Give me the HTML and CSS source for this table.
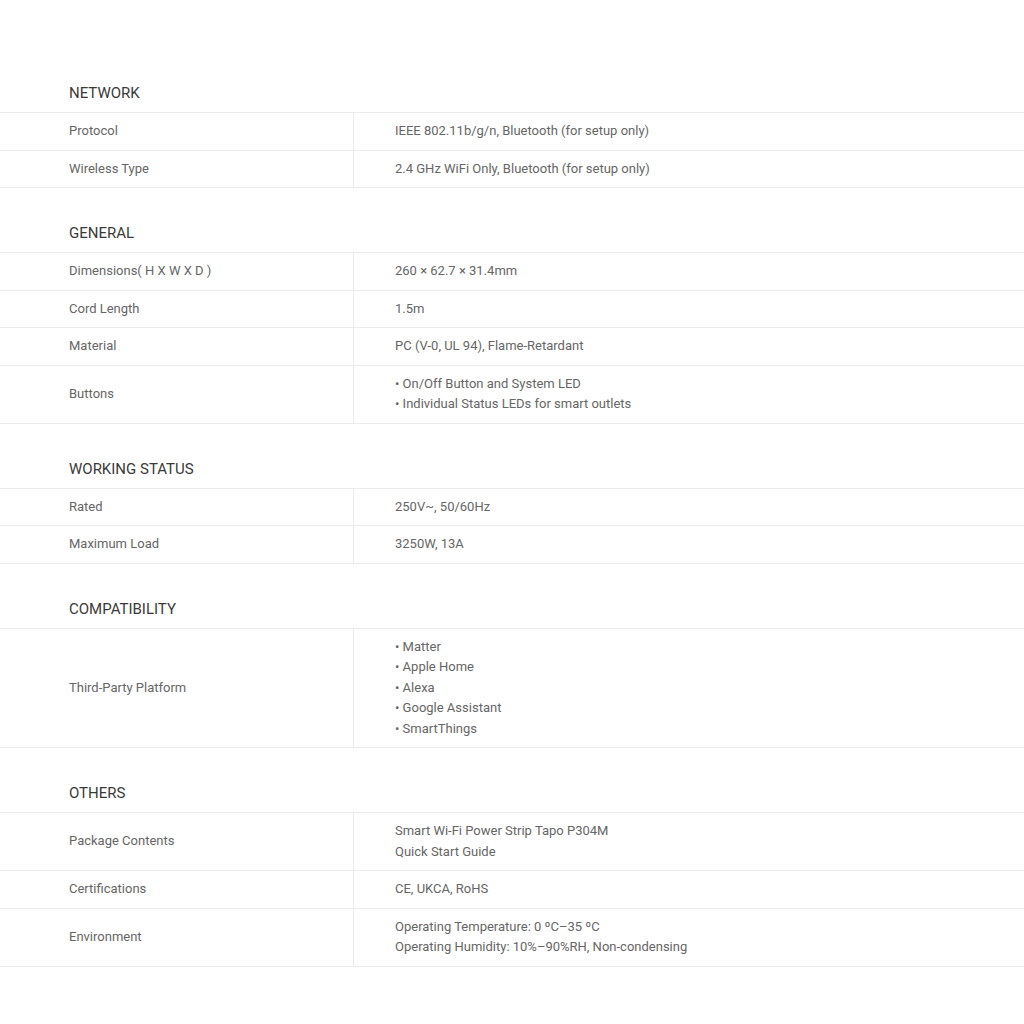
FILE: index.html
```html
<!DOCTYPE html>
<html lang="en">
<head>
  <meta charset="UTF-8" />
  <meta name="viewport" content="width=device-width, initial-scale=1.0"/>
  <title>Specifications | Tapo P304M</title>
  <link rel="stylesheet" href="styles.css">
</head>
<body>
  <div class="specs">

    <div class="spec-group">
      <h3>NETWORK</h3>
      <div class="spec-row">
        <div class="spec-name">Protocol</div>
        <div class="spec-value">IEEE 802.11b/g/n, Bluetooth (for setup only)</div>
      </div>
      <div class="spec-row">
        <div class="spec-name">Wireless Type</div>
        <div class="spec-value">2.4 GHz WiFi Only, Bluetooth (for setup only)</div>
      </div>
    </div>

    <div class="spec-group">
      <h3>GENERAL</h3>
      <div class="spec-row">
        <div class="spec-name">Dimensions( H X W X D )</div>
        <div class="spec-value">260 × 62.7 × 31.4mm</div>
      </div>
      <div class="spec-row">
        <div class="spec-name">Cord Length</div>
        <div class="spec-value">1.5m</div>
      </div>
      <div class="spec-row">
        <div class="spec-name">Material</div>
        <div class="spec-value">PC (V-0, UL 94), Flame-Retardant</div>
      </div>
      <div class="spec-row">
        <div class="spec-name">Buttons</div>
        <div class="spec-value">
          <p>• On/Off Button and System LED</p>
          <p>• Individual Status LEDs for smart outlets</p>
        </div>
      </div>
    </div>

    <div class="spec-group">
      <h3>WORKING STATUS</h3>
      <div class="spec-row">
        <div class="spec-name">Rated</div>
        <div class="spec-value">250V~, 50/60Hz</div>
      </div>
      <div class="spec-row">
        <div class="spec-name">Maximum Load</div>
        <div class="spec-value">3250W, 13A</div>
      </div>
    </div>

    <div class="spec-group">
      <h3>COMPATIBILITY</h3>
      <div class="spec-row">
        <div class="spec-name">Third-Party Platform</div>
        <div class="spec-value">
          <p>• Matter</p>
          <p>• Apple Home</p>
          <p>• Alexa</p>
          <p>• Google Assistant</p>
          <p>• SmartThings</p>
        </div>
      </div>
    </div>

    <div class="spec-group">
      <h3>OTHERS</h3>
      <div class="spec-row">
        <div class="spec-name">Package Contents</div>
        <div class="spec-value">
          <p>Smart Wi-Fi Power Strip Tapo P304M</p>
          <p>Quick Start Guide</p>
        </div>
      </div>
      <div class="spec-row">
        <div class="spec-name">Certifications</div>
        <div class="spec-value">CE, UKCA, RoHS</div>
      </div>
      <div class="spec-row">
        <div class="spec-name">Environment</div>
        <div class="spec-value">
          <p>Operating Temperature: 0 ºC–35 ºC</p>
          <p>Operating Humidity: 10%–90%RH, Non-condensing</p>
        </div>
      </div>
    </div>

  </div>
</body>
</html>
```

FILE: styles.css
```css
body {
  margin: 0;
  font-family: Roboto, "Liberation Sans", sans-serif;
  background: #fff;
  color: #666;
}

.specs {
  padding-top: 48px;
  padding-bottom: 57px;
}

.spec-group h3 {
  margin: 0;
  padding: 36px 0 10px 69px;
  font-size: 15px;
  font-weight: 400;
  line-height: 18px;
  color: #3a3a3a;
}

.spec-row {
  display: flex;
  border-top: 1px solid #ebebeb;
  font-size: 13px;
  line-height: 20.5px;
}

.spec-group .spec-row:last-child {
  border-bottom: 1px solid #ebebeb;
}

.spec-name {
  width: 354px;
  box-sizing: border-box;
  padding: 8px 0 8px 69px;
  border-right: 1px solid #ebebeb;
  display: flex;
  align-items: center;
}

.spec-value {
  flex: 1;
  padding: 8px 0 8px 41px;
}

.spec-value p {
  margin: 0;
}
```
